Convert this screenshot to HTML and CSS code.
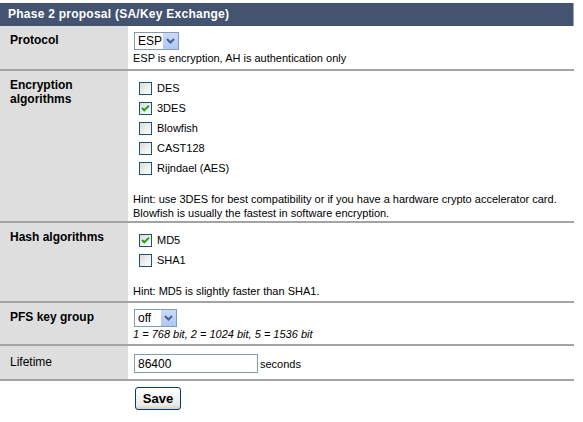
FILE: index.html
```html
<!DOCTYPE html>
<html>
<head>
<meta charset="utf-8">
<link rel="stylesheet" href="styles.css">
</head>
<body>
<div class="form">
  <div class="head">Phase 2 proposal (SA/Key Exchange)</div>
  <div class="row r-proto">
    <div class="lab b">Protocol</div>
    <div class="val">
      <span class="sel w45"><span class="sel-t">ESP</span><span class="sel-b"><svg width="9" height="6" viewBox="0 0 9 6"><path d="M1 1 L4.5 4.5 L8 1" fill="none" stroke="#4d6185" stroke-width="2"/></svg></span></span>
      <div class="note">ESP is encryption, AH is authentication only</div>
    </div>
  </div>
  <div class="row r-enc">
    <div class="lab b">Encryption algorithms</div>
    <div class="val">
      <div class="cbs">
        <div class="cbl"><span class="cb"></span>DES</div>
        <div class="cbl"><span class="cb"><svg width="11" height="11" viewBox="0 0 11 11"><path d="M2 5 L4.3 7.3 L9 2.6" fill="none" stroke="#21a121" stroke-width="2"/></svg></span>3DES</div>
        <div class="cbl"><span class="cb"></span>Blowfish</div>
        <div class="cbl"><span class="cb"></span>CAST128</div>
        <div class="cbl"><span class="cb"></span>Rijndael (AES)</div>
      </div>
      <div class="hint">Hint: use 3DES for best compatibility or if you have a hardware crypto accelerator card.<br>Blowfish is usually the fastest in software encryption.</div>
    </div>
  </div>
  <div class="row r-hash">
    <div class="lab b">Hash algorithms</div>
    <div class="val">
      <div class="cbs">
        <div class="cbl"><span class="cb"><svg width="11" height="11" viewBox="0 0 11 11"><path d="M2 5 L4.3 7.3 L9 2.6" fill="none" stroke="#21a121" stroke-width="2"/></svg></span>MD5</div>
        <div class="cbl"><span class="cb"></span>SHA1</div>
      </div>
      <div class="hint">Hint: MD5 is slightly faster than SHA1.</div>
    </div>
  </div>
  <div class="row r-pfs">
    <div class="lab b">PFS key group</div>
    <div class="val">
      <span class="sel w43"><span class="sel-t">off</span><span class="sel-b"><svg width="9" height="6" viewBox="0 0 9 6"><path d="M1 1 L4.5 4.5 L8 1" fill="none" stroke="#4d6185" stroke-width="2"/></svg></span></span>
      <div class="note it">1 = 768 bit, 2 = 1024 bit, 5 = 1536 bit</div>
    </div>
  </div>
  <div class="row r-life">
    <div class="lab plain">Lifetime</div>
    <div class="val"><span class="inp">86400</span><span class="unit">seconds</span></div>
  </div>
  <div class="actions">
    <button class="save">Save</button>
  </div>
</div>
</body>
</html>
```
FILE: styles.css
```css
html, body { margin: 0; padding: 0; background: #fff; }
body { font-family: "Liberation Sans", Arial, sans-serif; font-size: 11px; color: #000; }
.form { width: 574px; padding-top: 3px; }
.head { background: #435370; color: #fff; font-weight: bold; font-size: 12px; letter-spacing: 0.25px; height: 23px; line-height: 23px; padding-left: 8px; border-right: 1px solid #9aa5b8; box-sizing: border-box; }
.row { display: grid; grid-template-columns: 128px 1fr; border-bottom: 2px solid #a3a3a3; box-sizing: border-box; }
.lab { background: #dedede; padding: 7px 0 0 10px; }
.lab.b { font-weight: bold; font-size: 12px; line-height: 14px; }
.lab.plain { font-size: 12px; }
.val { padding: 5px 0 0 5px; }
.r-proto { height: 45px; }
.r-enc { height: 152px; }
.r-hash { height: 80px; }
.r-pfs { height: 43px; }
.r-life { height: 35px; }
.sel { display: inline-flex; align-items: center; justify-content: space-between; border: 1px solid #7f9db9; height: 18px; box-sizing: border-box; background: #fff; padding-left: 3px; margin: 1px 0 0 1px; }
.w45 { width: 45px; }
.w43 { width: 43px; }
.sel-t { font-size: 12px; }
.sel-b { width: 16px; height: 16px; background: linear-gradient(#cbdafc, #b0c6f5); display: flex; align-items: center; justify-content: center; border-left: 1px solid #fff; box-sizing: border-box; }
.note { margin-top: 2px; font-size: 11px; }
.note.it { font-style: italic; margin-top: 1px; }
.cbs { padding: 2px 0 0 6px; }
.cbl { height: 20px; display: flex; align-items: center; }
.cb { width: 11px; height: 11px; border: 1px solid #1c5180; background: linear-gradient(135deg, #dcdcd7, #fff); margin-right: 5px; display: inline-flex; align-items: center; justify-content: center; }
.hint { margin-top: 14px; line-height: 14px; }
.r-hash .hint { margin-top: 14px; }
.r-life .val { padding-top: 8px; display: flex; align-items: center; align-self: start; }
.r-life .lab { padding-top: 9px; }
.inp { display: inline-block; width: 124px; height: 19px; box-sizing: border-box; border: 1px solid #7f9db9; padding: 2px 3px; margin-left: 1px; margin-right: 2px; font-size: 12px; line-height: 14px; }
.actions { padding: 6px 0 0 135px; }
.save { font-family: inherit; font-weight: bold; font-size: 13px; width: 46px; height: 23px; border: 1px solid #003c74; border-radius: 3px; background: linear-gradient(#fff, #ecebe6 80%, #d6d0c5); padding: 0; color: #000; display: block; }
```
